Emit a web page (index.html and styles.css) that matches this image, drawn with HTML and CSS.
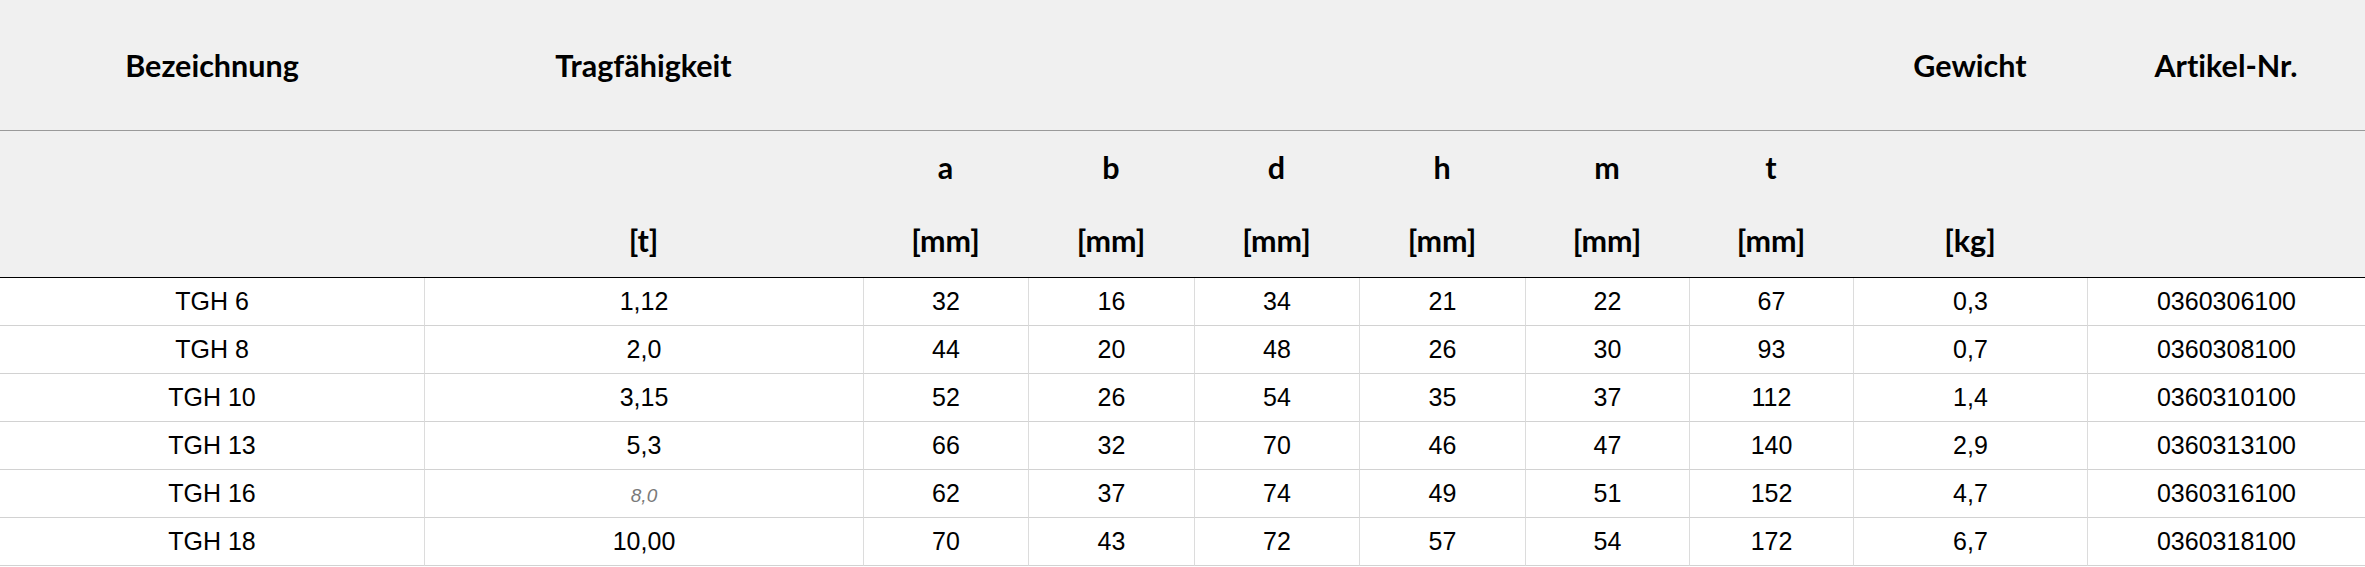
FILE: index.html
```html
<!DOCTYPE html>
<html lang="de">
<head>
<meta charset="utf-8">
<title>TGH</title>
<link rel="stylesheet" href="styles.css">
</head>
<body>
<table class="spec">
  <colgroup>
    <col class="c-name"><col class="c-load"><col class="c-a"><col class="c-b"><col class="c-d"><col class="c-h"><col class="c-m"><col class="c-t"><col class="c-kg"><col class="c-art">
  </colgroup>
  <thead>
    <tr class="head-1">
      <th>Bezeichnung</th>
      <th>Tragfähigkeit</th>
      <th></th><th></th><th></th><th></th><th></th><th></th>
      <th>Gewicht</th>
      <th>Artikel-Nr.</th>
    </tr>
    <tr class="head-2">
      <th><span class="sym"></span><span class="unit"></span></th>
      <th><span class="sym"></span><span class="unit">[t]</span></th>
      <th><span class="sym">a</span><span class="unit">[mm]</span></th>
      <th><span class="sym">b</span><span class="unit">[mm]</span></th>
      <th><span class="sym">d</span><span class="unit">[mm]</span></th>
      <th><span class="sym">h</span><span class="unit">[mm]</span></th>
      <th><span class="sym">m</span><span class="unit">[mm]</span></th>
      <th><span class="sym">t</span><span class="unit">[mm]</span></th>
      <th><span class="sym"></span><span class="unit">[kg]</span></th>
      <th><span class="sym"></span><span class="unit"></span></th>
    </tr>
  </thead>
  <tbody>
    <tr><td>TGH 6</td><td>1,12</td><td>32</td><td>16</td><td>34</td><td>21</td><td>22</td><td>67</td><td>0,3</td><td>0360306100</td></tr>
    <tr><td>TGH 8</td><td>2,0</td><td>44</td><td>20</td><td>48</td><td>26</td><td>30</td><td>93</td><td>0,7</td><td>0360308100</td></tr>
    <tr><td>TGH 10</td><td>3,15</td><td>52</td><td>26</td><td>54</td><td>35</td><td>37</td><td>112</td><td>1,4</td><td>0360310100</td></tr>
    <tr><td>TGH 13</td><td>5,3</td><td>66</td><td>32</td><td>70</td><td>46</td><td>47</td><td>140</td><td>2,9</td><td>0360313100</td></tr>
    <tr><td>TGH 16</td><td><span class="muted">8,0</span></td><td>62</td><td>37</td><td>74</td><td>49</td><td>51</td><td>152</td><td>4,7</td><td>0360316100</td></tr>
    <tr><td>TGH 18</td><td>10,00</td><td>70</td><td>43</td><td>72</td><td>57</td><td>54</td><td>172</td><td>6,7</td><td>0360318100</td></tr>
  </tbody>
</table>
</body>
</html>
```

FILE: styles.css
```css
html, body {
  margin: 0;
  padding: 0;
  background: #ffffff;
}

.spec {
  width: 2365px;
  table-layout: fixed;
  border-collapse: separate;
  border-spacing: 0;
  font-family: "Liberation Sans", Arial, sans-serif;
  color: #000;
}

.c-name { width: 424px; }
.c-load { width: 439px; }
.c-a { width: 165px; }
.c-b { width: 166px; }
.c-d { width: 165px; }
.c-h { width: 166px; }
.c-m { width: 164px; }
.c-t { width: 164px; }
.c-kg { width: 234px; }
.c-art { width: 278px; }

.spec th {
  box-sizing: border-box;
  padding: 0;
  background: #f0f0f0;
  font-family: Lato, "Open Sans", sans-serif;
  font-weight: 700;
  font-size: 30.5px;
  font-variant-ligatures: none;
  font-feature-settings: "liga" 0, "dlig" 0;
  text-align: center;
  vertical-align: middle;
}

.head-1 th {
  height: 131px;
  border-bottom: 1px solid #9a9a9a;
}

.head-2 th {
  height: 147px;
  border-bottom: 1px solid #000;
}

.sym, .unit {
  display: block;
  height: 73px;
  line-height: 73px;
}

.spec td {
  box-sizing: border-box;
  height: 48px;
  padding: 0;
  font-size: 25px;
  text-align: center;
  vertical-align: middle;
  border-bottom: 1px solid #d2d2d2;
  border-left: 1px solid #dcdcdc;
}

.spec td:first-child {
  border-left: none;
}

.muted {
  font-style: italic;
  font-size: 19px;
  color: #7a7a7a;
}
```
